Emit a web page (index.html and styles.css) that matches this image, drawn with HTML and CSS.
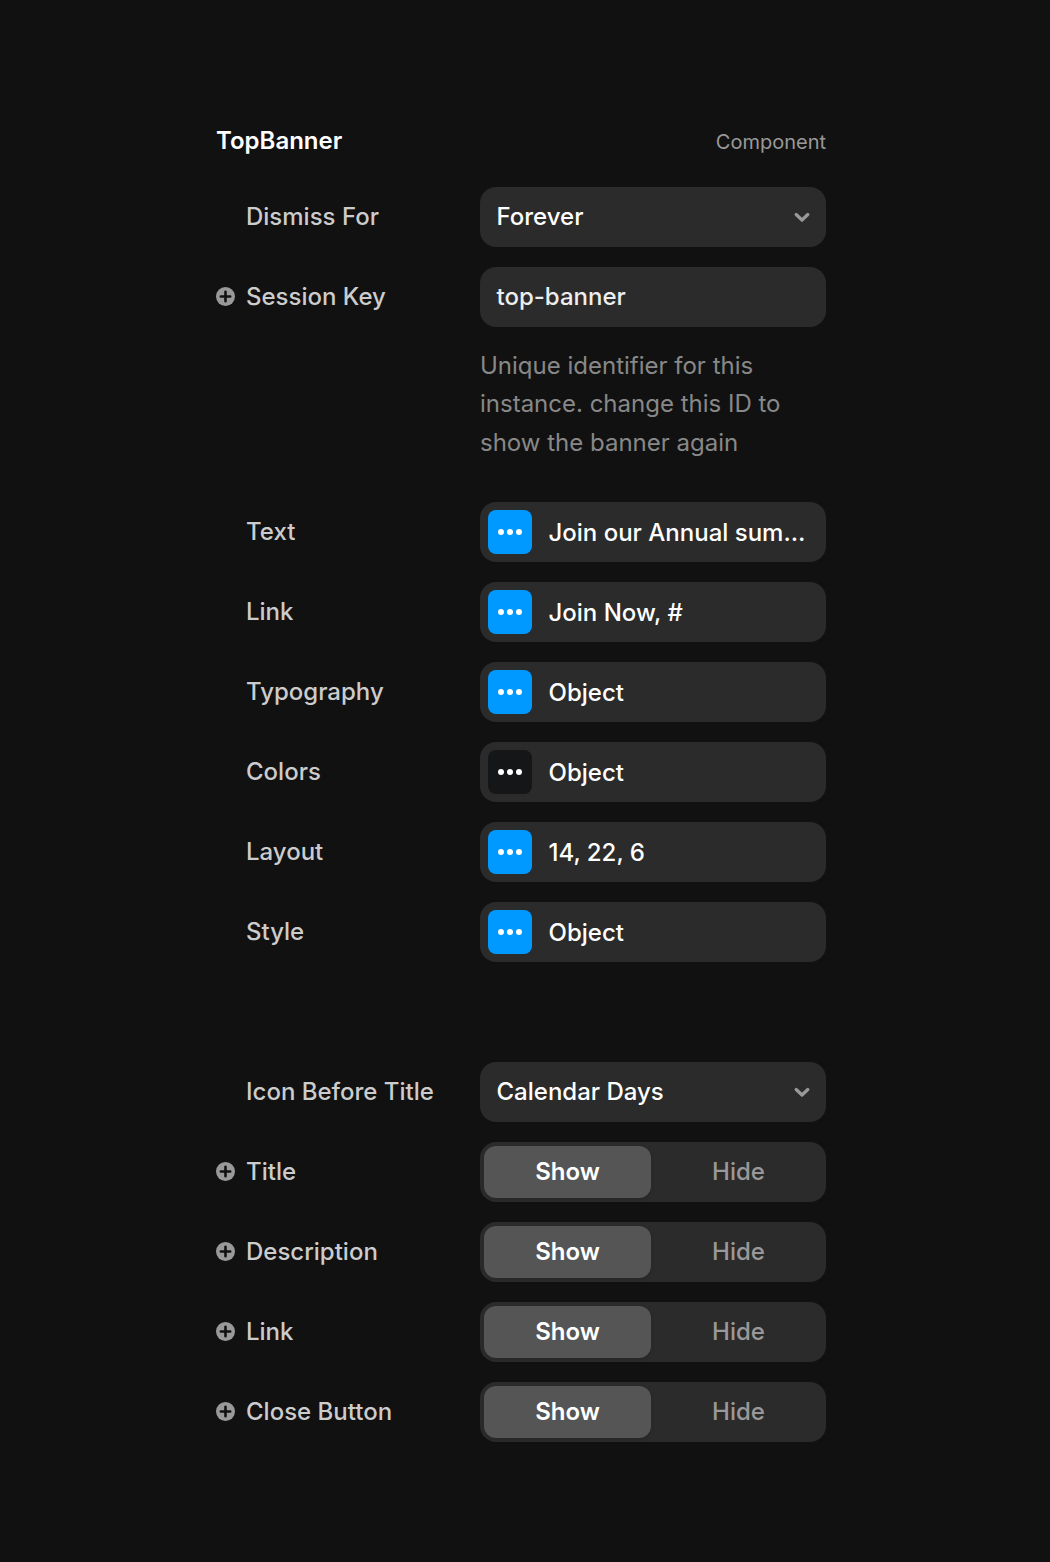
FILE: index.html
```html
<!DOCTYPE html>
<html lang="en">
<head>
    <meta charset="UTF-8">
    <meta name="viewport" content="width=device-width, initial-scale=1.0">
    <title>TopBanner</title>
    <link rel="stylesheet" href="styles.css">
</head>
<body>
    <!-- Shared icons -->
    <svg class="icon-sprite" aria-hidden="true">
        <symbol id="plus" viewBox="0 0 20 20">
            <circle cx="9.5" cy="9.5" r="9.5" fill="#999"/>
            <path d="M9.5 4.8v9.4M4.8 9.5h9.4" stroke="#111" stroke-width="2.6" stroke-linecap="round"/>
        </symbol>
        <symbol id="chevron" viewBox="0 0 16 10">
            <path d="M2.2 2.5L8 8l5.8-5.5" fill="none" stroke="#999" stroke-width="3.2" stroke-linecap="round" stroke-linejoin="round"/>
        </symbol>
        <symbol id="dots" viewBox="0 0 24 6">
            <circle cx="3" cy="3" r="3" fill="#fff"/>
            <circle cx="12" cy="3" r="3" fill="#fff"/>
            <circle cx="21" cy="3" r="3" fill="#fff"/>
        </symbol>
    </svg>

    <main class="panel">
        <header class="panel-header">
            <h1>TopBanner</h1>
            <span class="panel-type">Component</span>
        </header>

        <section class="group">
            <div class="row">
                <div class="label">Dismiss For</div>
                <div class="field select"><span>Forever</span><svg class="chevron"><use href="#chevron"/></svg></div>
            </div>
            <div class="row">
                <div class="label"><svg class="plus"><use href="#plus"/></svg>Session Key</div>
                <div class="field input"><span>top-banner</span></div>
            </div>
            <p class="help">Unique identifier for this instance. change this ID to show the banner again</p>
        </section>

        <section class="group group-objects">
            <div class="row">
                <div class="label">Text</div>
                <div class="field object"><span class="swatch"><svg class="dots"><use href="#dots"/></svg></span><span class="value">Join our Annual sum…</span></div>
            </div>
            <div class="row">
                <div class="label">Link</div>
                <div class="field object"><span class="swatch"><svg class="dots"><use href="#dots"/></svg></span><span class="value">Join Now, #</span></div>
            </div>
            <div class="row">
                <div class="label">Typography</div>
                <div class="field object"><span class="swatch"><svg class="dots"><use href="#dots"/></svg></span><span class="value">Object</span></div>
            </div>
            <div class="row">
                <div class="label">Colors</div>
                <div class="field object"><span class="swatch swatch-dark"><svg class="dots"><use href="#dots"/></svg></span><span class="value">Object</span></div>
            </div>
            <div class="row">
                <div class="label">Layout</div>
                <div class="field object"><span class="swatch"><svg class="dots"><use href="#dots"/></svg></span><span class="value">14, 22, 6</span></div>
            </div>
            <div class="row">
                <div class="label">Style</div>
                <div class="field object"><span class="swatch"><svg class="dots"><use href="#dots"/></svg></span><span class="value">Object</span></div>
            </div>
        </section>

        <section class="group group-toggles">
            <div class="row">
                <div class="label">Icon Before Title</div>
                <div class="field select"><span>Calendar Days</span><svg class="chevron"><use href="#chevron"/></svg></div>
            </div>
            <div class="row">
                <div class="label"><svg class="plus"><use href="#plus"/></svg>Title</div>
                <div class="field toggle"><button class="option active">Show</button><button class="option">Hide</button></div>
            </div>
            <div class="row">
                <div class="label"><svg class="plus"><use href="#plus"/></svg>Description</div>
                <div class="field toggle"><button class="option active">Show</button><button class="option">Hide</button></div>
            </div>
            <div class="row">
                <div class="label"><svg class="plus"><use href="#plus"/></svg>Link</div>
                <div class="field toggle"><button class="option active">Show</button><button class="option">Hide</button></div>
            </div>
            <div class="row">
                <div class="label"><svg class="plus"><use href="#plus"/></svg>Close Button</div>
                <div class="field toggle"><button class="option active">Show</button><button class="option">Hide</button></div>
            </div>
        </section>
    </main>
</body>
</html>
```

FILE: styles.css
```css
* {
    margin: 0;
    padding: 0;
    box-sizing: border-box;
}
body {
    background-color: #111;
    color: #fff;
    font-family: Inter, sans-serif;
    font-size: 24px;
    line-height: 30px;
    min-height: 1562px;
}
.icon-sprite {
    display: none;
}
.panel {
    width: 610px;
    margin-left: 216px;
    padding-top: 126px;
}
.panel-header {
    display: flex;
    justify-content: space-between;
    align-items: center;
    height: 30px;
    margin-bottom: 31px;
}
.panel-header h1 {
    font-size: 24px;
    font-weight: 600;
}
.panel-type {
    color: #999;
    font-size: 20px;
    padding-top: 1px;
}
.group {
    display: flex;
    flex-direction: column;
    gap: 20px;
}
.group-objects {
    margin-top: 40px;
}
.group-toggles {
    margin-top: 100px;
}
.row {
    display: grid;
    grid-template-columns: 234px 346px;
    padding-left: 30px;
    align-items: center;
}
.label {
    display: flex;
    align-items: center;
    color: #ccc;
    font-weight: 500;
}
.plus {
    width: 20px;
    height: 20px;
    margin-left: -30px;
    margin-right: 10px;
}
.field {
    display: flex;
    align-items: center;
    height: 60px;
    border-radius: 16px;
    background-color: #2b2b2b;
    font-weight: 500;
}
.select {
    justify-content: space-between;
    padding: 0 16px 0 16.5px;
}
.input {
    padding: 0 16.5px;
    color: #eee;
}
.chevron {
    width: 16px;
    height: 10px;
}
.object {
    padding: 0 16px 0 8px;
    gap: 16.5px;
}
.swatch {
    display: flex;
    align-items: center;
    justify-content: center;
    flex-shrink: 0;
    width: 44px;
    height: 44px;
    border-radius: 8px;
    background-color: #09f;
}
.swatch-dark {
    background-color: #151617;
}
.dots {
    width: 24px;
    height: 6px;
}
.value {
    overflow: hidden;
    white-space: nowrap;
    text-overflow: ellipsis;
    padding-top: 1px;
}
.help {
    width: 346px;
    margin-left: 264px;
    padding-right: 30px;
    color: #888;
    line-height: 38.4px;
}
.toggle {
    padding: 4px;
    gap: 4px;
}
.option {
    flex: 1;
    height: 52px;
    border: none;
    border-radius: 12px;
    background: none;
    color: #999;
    font: inherit;
}
.option.active {
    background-color: #555;
    color: #fff;
    font-weight: 600;
    box-shadow: 0 2px 4px rgba(0, 0, 0, 0.1);
}
```
